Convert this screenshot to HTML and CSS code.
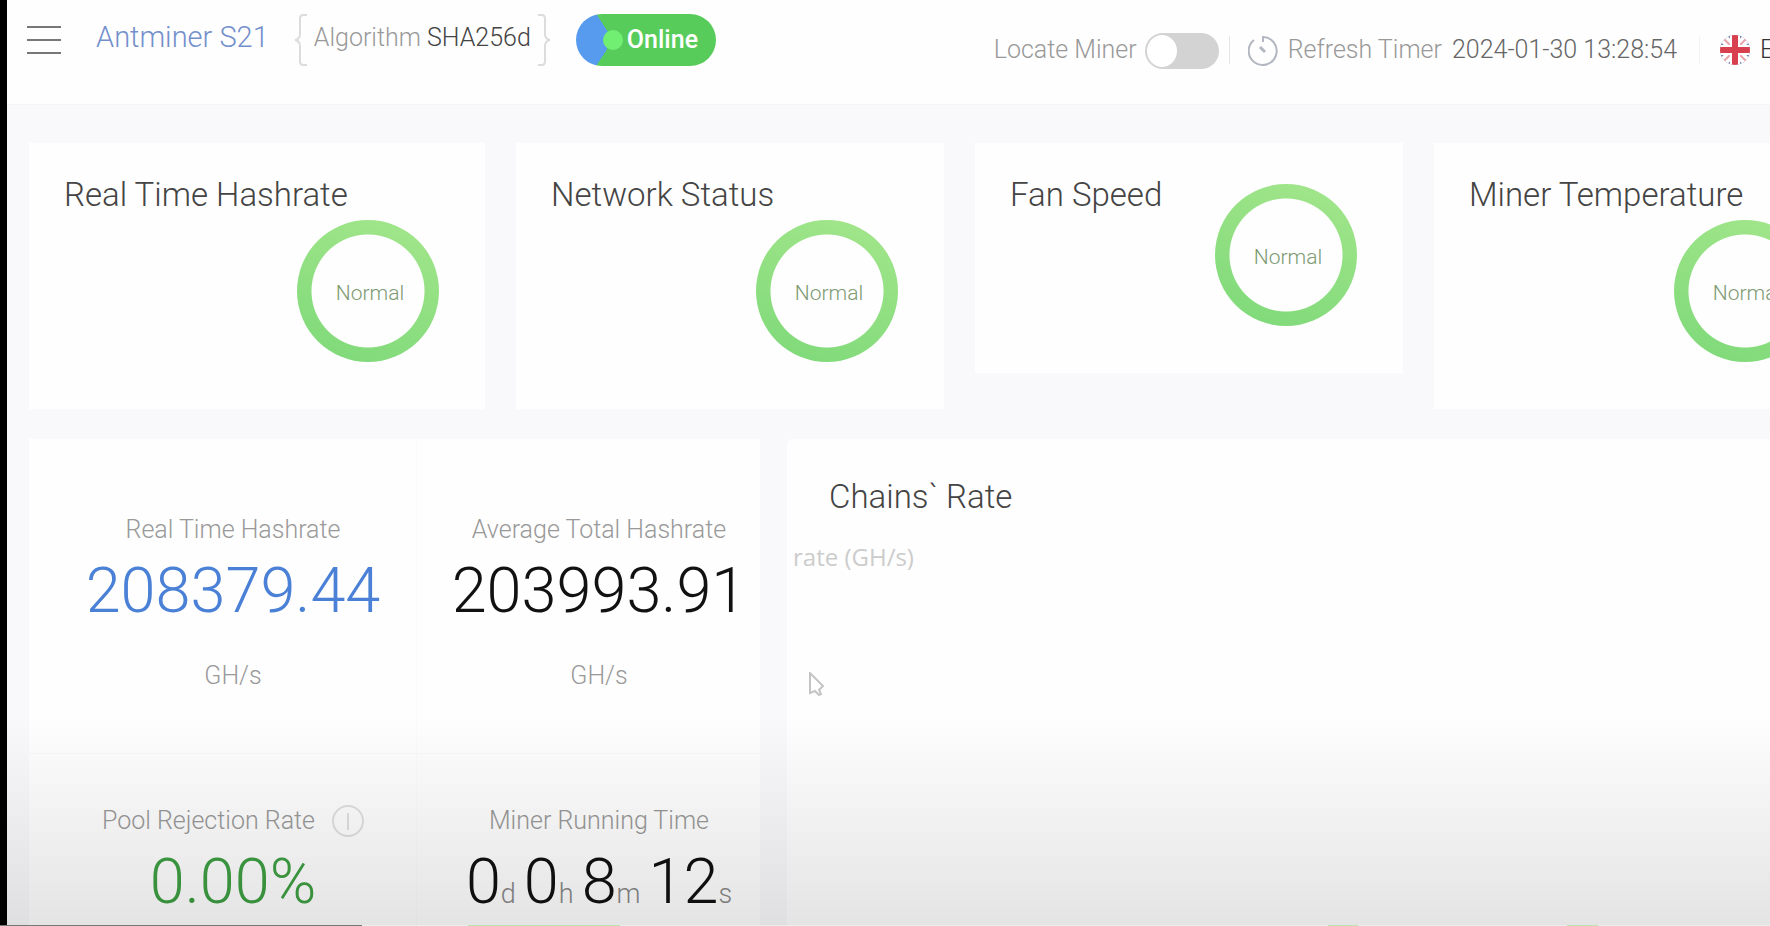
FILE: index.html
```html
<!DOCTYPE html>
<html lang="en">
<head>
    <meta charset="UTF-8">
    <meta name="viewport" content="width=device-width, initial-scale=1.0">
    <title>Antminer S21</title>
    <link rel="stylesheet" href="styles.css">
</head>
<body>
    <div class="app">
        <header class="header">
            <button class="menu" aria-label="Menu">
                <span></span>
                <span></span>
                <span></span>
            </button>
            <div class="model">Antminer S21</div>
            <div class="algorithm">
                <svg class="brace" width="14" height="52" viewBox="0 0 14 52"><path d="M13 1H9Q6 1 6 5V20Q6 25 1 26Q6 27 6 32V47Q6 51 9 51H13"/></svg>
                <span>Algorithm <b>SHA256d</b></span>
                <svg class="brace" width="14" height="52" viewBox="0 0 14 52"><path d="M1 1H5Q8 1 8 5V20Q8 25 13 26Q8 27 8 32V47Q8 51 5 51H1"/></svg>
            </div>
            <div class="status"><i class="dot"></i>Online</div>

            <div class="tools">
                <label for="locate">Locate Miner</label>
                <input type="checkbox" id="locate" class="switch">
                <span class="line"></span>
                <svg class="timer" width="32" height="34" viewBox="0 0 32 34">
                    <path d="M6 7A14 14 0 1 0 15 4V9"/>
                    <path class="hand" d="M12 14L17 19"/>
                </svg>
                <span>Refresh Timer</span>
                <b>2024-01-30 13:28:54</b>
                <span class="line line-light"></span>
                <svg class="flag" width="30" height="30" viewBox="0 0 30 30">
                    <clipPath id="round"><circle cx="15" cy="15" r="15"/></clipPath>
                    <g clip-path="url(#round)">
                        <rect width="30" height="30" fill="#7c82ad"/>
                        <path d="M0 0L30 30M30 0L0 30" stroke="#fff" stroke-width="9"/>
                        <path d="M0 0L30 30M30 0L0 30" stroke="#eba3ac" stroke-width="2"/>
                        <path d="M15 0V30M0 15H30" stroke="#fff" stroke-width="10"/>
                        <path d="M15 0V30M0 15H30" stroke="#d9404f" stroke-width="6"/>
                    </g>
                </svg>
                <select class="language" aria-label="Language">
                    <option>English</option>
                </select>
            </div>
        </header>

        <main class="content">
            <section class="cards">
                <div class="card">
                    <h2>Real Time Hashrate</h2>
                    <div class="ring"><span>Normal</span></div>
                </div>
                <div class="card">
                    <h2>Network Status</h2>
                    <div class="ring"><span>Normal</span></div>
                </div>
                <div class="card">
                    <h2>Fan Speed</h2>
                    <div class="ring"><span>Normal</span></div>
                </div>
                <div class="card">
                    <h2>Miner Temperature</h2>
                    <div class="ring"><span>Normal</span></div>
                </div>
            </section>

            <section class="panels">
                <div class="stats">
                    <div class="stat">
                        <div class="label">Real Time Hashrate</div>
                        <div class="value blue">208379.44</div>
                        <div class="unit">GH/s</div>
                    </div>
                    <div class="stat">
                        <div class="label">Average Total Hashrate</div>
                        <div class="value">203993.91</div>
                        <div class="unit">GH/s</div>
                    </div>
                    <div class="stat">
                        <div class="label">Pool Rejection Rate
                            <svg class="info" width="32" height="34" viewBox="0 0 32 34"><circle cx="16" cy="17" r="15"/><path d="M16 9V26"/></svg>
                        </div>
                        <div class="value green">0.00%</div>
                    </div>
                    <div class="stat">
                        <div class="label">Miner Running Time</div>
                        <div class="value time">
                            <span>0<small>d</small></span>
                            <span>0<small>h</small></span>
                            <span>8<small>m</small></span>
                            <span>12<small>s</small></span>
                        </div>
                    </div>
                </div>
                <div class="chains">
                    <h2>Chains` Rate</h2>
                    <div class="axis">rate (GH/s)</div>
                    <svg class="cursor" width="16" height="25" viewBox="0 0 16 25"><path d="M1 1V21L6 19L10 23L12 22L10 18L14 14Z"/></svg>
                </div>
            </section>
        </main>
    </div>
    <div class="shade"></div>
    <div class="progress"></div>
</body>
</html>
```
FILE: styles.css
```css
* {
    box-sizing: border-box;
}

body {
    margin: 0;
    height: 100vh;
    overflow: hidden;
    border-left: 7px solid #000;
    background: #f9f9fc;
    color: #999;
    font-family: Roboto, "Liberation Sans", sans-serif;
    font-size: 25px;
    font-weight: 300;
}

/* the dashboard is a bit wider than the window */
.app {
    width: calc(100% + 92px);
}

.header {
    display: flex;
    align-items: flex-start;
    height: 105px;
    padding: 14px 22px 0 20px;
    background: #fefefe;
    border-bottom: 1px solid #f5f5f6;
    line-height: 52px;
    white-space: nowrap;
}

.header b {
    color: #666;
    font-weight: 300;
}

.menu {
    display: flex;
    flex-direction: column;
    justify-content: space-between;
    width: 34px;
    height: 28px;
    margin: 12px 35px 0 0;
    padding: 0;
    border: 0;
    background: none;
}

.menu span {
    height: 2px;
    background: #777;
}

.model {
    color: #7490cc;
    font-size: 29px;
    line-height: 46px;
}

.algorithm {
    display: flex;
    gap: 6px;
    margin-left: 25px;
    line-height: 48px;
}

.header .algorithm b {
    color: #444;
}

.brace {
    fill: none;
    stroke: #dcdcdc;
    stroke-width: 2;
}

.status {
    display: flex;
    align-items: center;
    gap: 4px;
    height: 52px;
    margin-left: 25px;
    padding: 0 18px 0 27px;
    border-radius: 26px;
    background: conic-gradient(from 213deg at 37px 50%, #579bee 114deg, #57cc5a 115deg);
    color: #fff;
    font-weight: 500;
}

.dot {
    width: 20px;
    height: 20px;
    border-radius: 50%;
    background: #70ef72;
}

.tools {
    display: flex;
    align-items: center;
    margin: 10px 0 0 auto;
}

.tools b {
    margin-left: 10px;
}

.switch {
    appearance: none;
    width: 74px;
    height: 36px;
    margin: 2px 10px 0 8px;
    padding: 2px;
    border-radius: 18px;
    background: #d3d3d3;
}

.switch::before {
    content: "";
    display: block;
    width: 30px;
    height: 32px;
    border-radius: 50%;
    background: #fff;
}

.line {
    width: 1px;
    height: 28px;
    margin-right: 18px;
    background: #e6e6e6;
}

.line-light {
    margin: 0 20px 0 22px;
    background: #f3f3f3;
}

.timer {
    margin-right: 8px;
    fill: none;
    stroke: #b3b7c1;
    stroke-width: 2;
}

.timer .hand {
    stroke-width: 3;
}

.flag {
    margin-right: 10px;
}

.language {
    appearance: none;
    padding: 0;
    border: 0;
    background: none;
    color: #333;
    font: inherit;
}

.content {
    padding: 38px 0 0 22px;
}

h2 {
    margin: 0;
    color: #444;
    font-size: 33px;
    font-weight: 300;
    line-height: 36px;
}

.cards {
    display: grid;
    grid-template-columns: 456fr 428fr 428fr 428fr;
    align-items: start;
    gap: 31px;
}

/* the ring drops under the title when both do not fit */
.card {
    display: flex;
    flex-wrap: wrap;
    align-items: flex-start;
    padding: 34px 46px 47px 35px;
    background: #fefefe;
}

.ring {
    display: flex;
    align-items: center;
    justify-content: center;
    width: 142px;
    height: 142px;
    margin: 7px 0 0 auto;
    padding: 4px 0 0 4px;
    border-radius: 50%;
    background: radial-gradient(circle, #fefefe 56px, transparent 57px), linear-gradient(200deg, #a4e68c, #7dd978);
    color: #7d9a72;
    font-size: 21px;
}

.panels {
    display: grid;
    grid-template-columns: 731fr 1075fr;
    gap: 27px;
    margin-top: 30px;
}

.stats {
    display: grid;
    grid-template-columns: 387fr 344fr;
    grid-template-rows: 314px 314px;
    background: #fefefe;
}

.stat {
    padding: 51px 0 0 21px;
    border-top: 1px solid #f9f9f9;
    text-align: center;
    white-space: nowrap;
}

.stat:nth-child(-n+2) {
    padding-top: 75px;
    border-top: 0;
}

.stat:nth-child(even) {
    border-left: 1px solid #fafafa;
}

.label {
    display: flex;
    align-items: center;
    justify-content: center;
    gap: 17px;
    height: 32px;
    line-height: 32px;
}

.info {
    fill: none;
    stroke: #e0e0e0;
    stroke-width: 2;
}

.value {
    color: #111;
    font-size: 63px;
    line-height: 90px;
}

.blue {
    color: #4a80d6;
}

.green {
    color: #3f9f43;
}

.unit {
    margin-top: 24px;
    line-height: 32px;
}

.time {
    display: flex;
    align-items: baseline;
    justify-content: center;
    gap: 8px;
}

.time small {
    color: #888;
    font-size: 27px;
}

.chains {
    position: relative;
    background: #fefefe;
    border-radius: 6px 0 0 0;
    padding: 40px 0 0 42px;
}

.axis {
    margin: 26px 0 0 -36px;
    color: #ccc;
    font-family: "Open Sans", sans-serif;
    font-size: 24px;
    font-weight: 400;
    line-height: 32px;
}

.cursor {
    position: absolute;
    top: 233px;
    left: 22px;
    fill: #fff;
    stroke: #c4c4c4;
    stroke-width: 2;
}

/* dark fade of the player controls along the bottom */
.shade {
    position: fixed;
    right: 0;
    bottom: 0;
    left: 0;
    height: 210px;
    background: linear-gradient(rgba(0, 0, 0, 0), rgba(0, 0, 0, 0.1));
    pointer-events: none;
}

.progress {
    position: fixed;
    right: 0;
    bottom: 0;
    left: 0;
    height: 1px;
    background: linear-gradient(90deg, #777 362px, #eee 362px, #eee 468px, #bfe3ae 468px, #bfe3ae 620px, #eee 620px, #eee 1328px, #bfe3ae 1328px, #bfe3ae 1358px, #eee 1358px, #eee 1567px, #bfe3ae 1567px, #bfe3ae 1598px, #eee 1598px);
}
```
